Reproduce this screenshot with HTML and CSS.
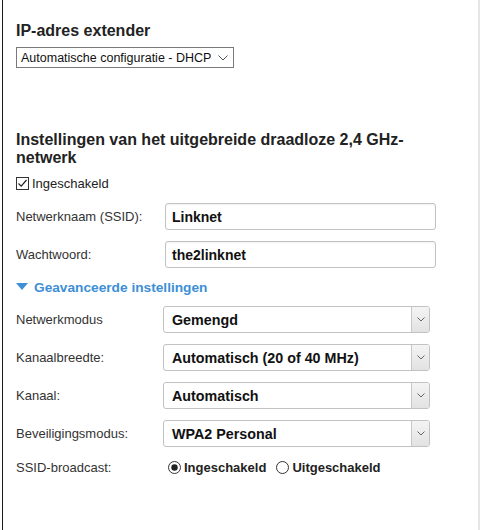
FILE: index.html
```html
<!DOCTYPE html>
<html>
<head>
<meta charset="utf-8">
<link rel="stylesheet" href="styles.css">
</head>
<body>
<div class="frame">
  <div class="panel">
    <h2 class="title t1">IP-adres extender</h2>
    <div class="native-select">
      <span>Automatische configuratie - DHCP</span>
      <svg width="10" height="6" viewBox="0 0 10 6"><path d="M0.5 0.5 L5 5 L9.5 0.5" fill="none" stroke="#555" stroke-width="1"/></svg>
    </div>

    <h2 class="title t2">Instellingen van het uitgebreide draadloze 2,4 GHz-netwerk</h2>
    <label class="check">
      <svg width="13" height="13" viewBox="0 0 13 13"><rect x="0.5" y="0.5" width="12" height="12" fill="#fff" stroke="#333"/><path d="M2.5 6.5 L5.2 9.2 L10.5 3" fill="none" stroke="#222" stroke-width="1.2"/></svg>
      <span>Ingeschakeld</span>
    </label>

    <div class="row">
      <div class="label">Netwerknaam (SSID):</div>
      <div class="input">Linknet</div>
    </div>
    <div class="row">
      <div class="label">Wachtwoord:</div>
      <div class="input">the2linknet</div>
    </div>

    <div class="advanced">
      <svg width="12" height="8" viewBox="0 0 12 8"><path d="M0 0 L12 0 L6 7 Z" fill="#3d8fd6"/></svg>
      <span>Geavanceerde instellingen</span>
    </div>

    <div class="row">
      <div class="label">Netwerkmodus</div>
      <div class="select"><span class="val">Gemengd</span><span class="arrow"><svg width="8" height="5" viewBox="0 0 8 5"><path d="M0.5 0.5 L4 4 L7.5 0.5" fill="none" stroke="#666" stroke-width="1"/></svg></span></div>
    </div>
    <div class="row">
      <div class="label">Kanaalbreedte:</div>
      <div class="select"><span class="val">Automatisch (20 of 40 MHz)</span><span class="arrow"><svg width="8" height="5" viewBox="0 0 8 5"><path d="M0.5 0.5 L4 4 L7.5 0.5" fill="none" stroke="#666" stroke-width="1"/></svg></span></div>
    </div>
    <div class="row">
      <div class="label">Kanaal:</div>
      <div class="select"><span class="val">Automatisch</span><span class="arrow"><svg width="8" height="5" viewBox="0 0 8 5"><path d="M0.5 0.5 L4 4 L7.5 0.5" fill="none" stroke="#666" stroke-width="1"/></svg></span></div>
    </div>
    <div class="row">
      <div class="label">Beveiligingsmodus:</div>
      <div class="select"><span class="val">WPA2 Personal</span><span class="arrow"><svg width="8" height="5" viewBox="0 0 8 5"><path d="M0.5 0.5 L4 4 L7.5 0.5" fill="none" stroke="#666" stroke-width="1"/></svg></span></div>
    </div>
    <div class="row radio-row">
      <div class="label">SSID-broadcast:</div>
      <div class="radios">
        <span class="radio"><svg width="13" height="13" viewBox="0 0 13 13"><circle cx="6.5" cy="6.5" r="6" fill="#fff" stroke="#333"/><circle cx="6.5" cy="6.5" r="3.2" fill="#222"/></svg>Ingeschakeld</span>
        <span class="radio"><svg width="13" height="13" viewBox="0 0 13 13"><circle cx="6.5" cy="6.5" r="6" fill="#fff" stroke="#333"/></svg>Uitgeschakeld</span>
      </div>
    </div>
  </div>
</div>
</body>
</html>
```

FILE: styles.css
```css
html, body {
  margin: 0;
  padding: 0;
  background: #fff;
}
body {
  font-family: "Liberation Sans", Arial, sans-serif;
  color: #333;
  width: 480px;
  height: 530px;
  overflow: hidden;
}
.frame {
  display: flex;
  height: 530px;
  padding-left: 2px;
  border-right: 2px solid #e6e6e6;
  box-sizing: border-box;
}
.panel {
  flex: 1;
  border-left: 1px solid #1a1a1a;
  padding: 22px 0 0 13px;
}
.title {
  margin: 0;
  font-size: 16px;
  font-weight: bold;
  color: #222;
  line-height: 18px;
}
.t1 {
  margin-bottom: 7px;
}
.t2 {
  margin-top: 63px;
  width: 400px;
  margin-bottom: 9px;
}
.native-select {
  width: 218px;
  height: 21px;
  box-sizing: border-box;
  border: 1px solid #7a7a7a;
  display: flex;
  align-items: center;
  justify-content: space-between;
  padding: 0 5px 0 4px;
  font-size: 12.5px;
  color: #111;
  white-space: nowrap;
}
.check {
  display: flex;
  align-items: center;
  gap: 3px;
  font-size: 13px;
  color: #222;
  height: 15px;
  margin-bottom: 12px;
}
.row {
  display: flex;
  align-items: center;
  height: 27px;
  margin-bottom: 11px;
}
.label {
  width: 149px;
  flex: none;
  font-size: 13px;
  color: #333;
}
.input {
  width: 271px;
  height: 27px;
  box-sizing: border-box;
  border: 1px solid #c2c2c2;
  border-radius: 3px;
  box-shadow: inset 0 1px 2px rgba(0,0,0,0.06);
  font-size: 14px;
  font-weight: bold;
  color: #111;
  display: flex;
  align-items: center;
  padding-left: 6px;
}
.advanced {
  display: flex;
  align-items: center;
  gap: 6px;
  color: #3d8fd6;
  font-size: 13.7px;
  font-weight: bold;
  height: 16px;
  margin-top: 2px;
  margin-bottom: 11px;
}
.select {
  margin-left: -2px;
  width: 267px;
  height: 27px;
  box-sizing: border-box;
  border: 1px solid #c2c2c2;
  border-radius: 3px;
  display: flex;
  align-items: stretch;
  font-size: 14.3px;
  font-weight: bold;
  color: #111;
  overflow: hidden;
}
.select .val {
  flex: 1;
  display: flex;
  align-items: center;
  padding-left: 8px;
}
.select .arrow {
  width: 17px;
  border-left: 1px solid #c8c8c8;
  background: linear-gradient(#f4f4f4, #e2e2e2);
  display: flex;
  align-items: center;
  justify-content: center;
}
.radio-row {
  height: 18px;
  margin-top: 8px;
}
.radios {
  display: flex;
  align-items: center;
  gap: 10px;
  margin-left: 3px;
  font-size: 13px;
  font-weight: bold;
  color: #222;
}
.radio {
  display: flex;
  align-items: center;
  gap: 3px;
}
```
